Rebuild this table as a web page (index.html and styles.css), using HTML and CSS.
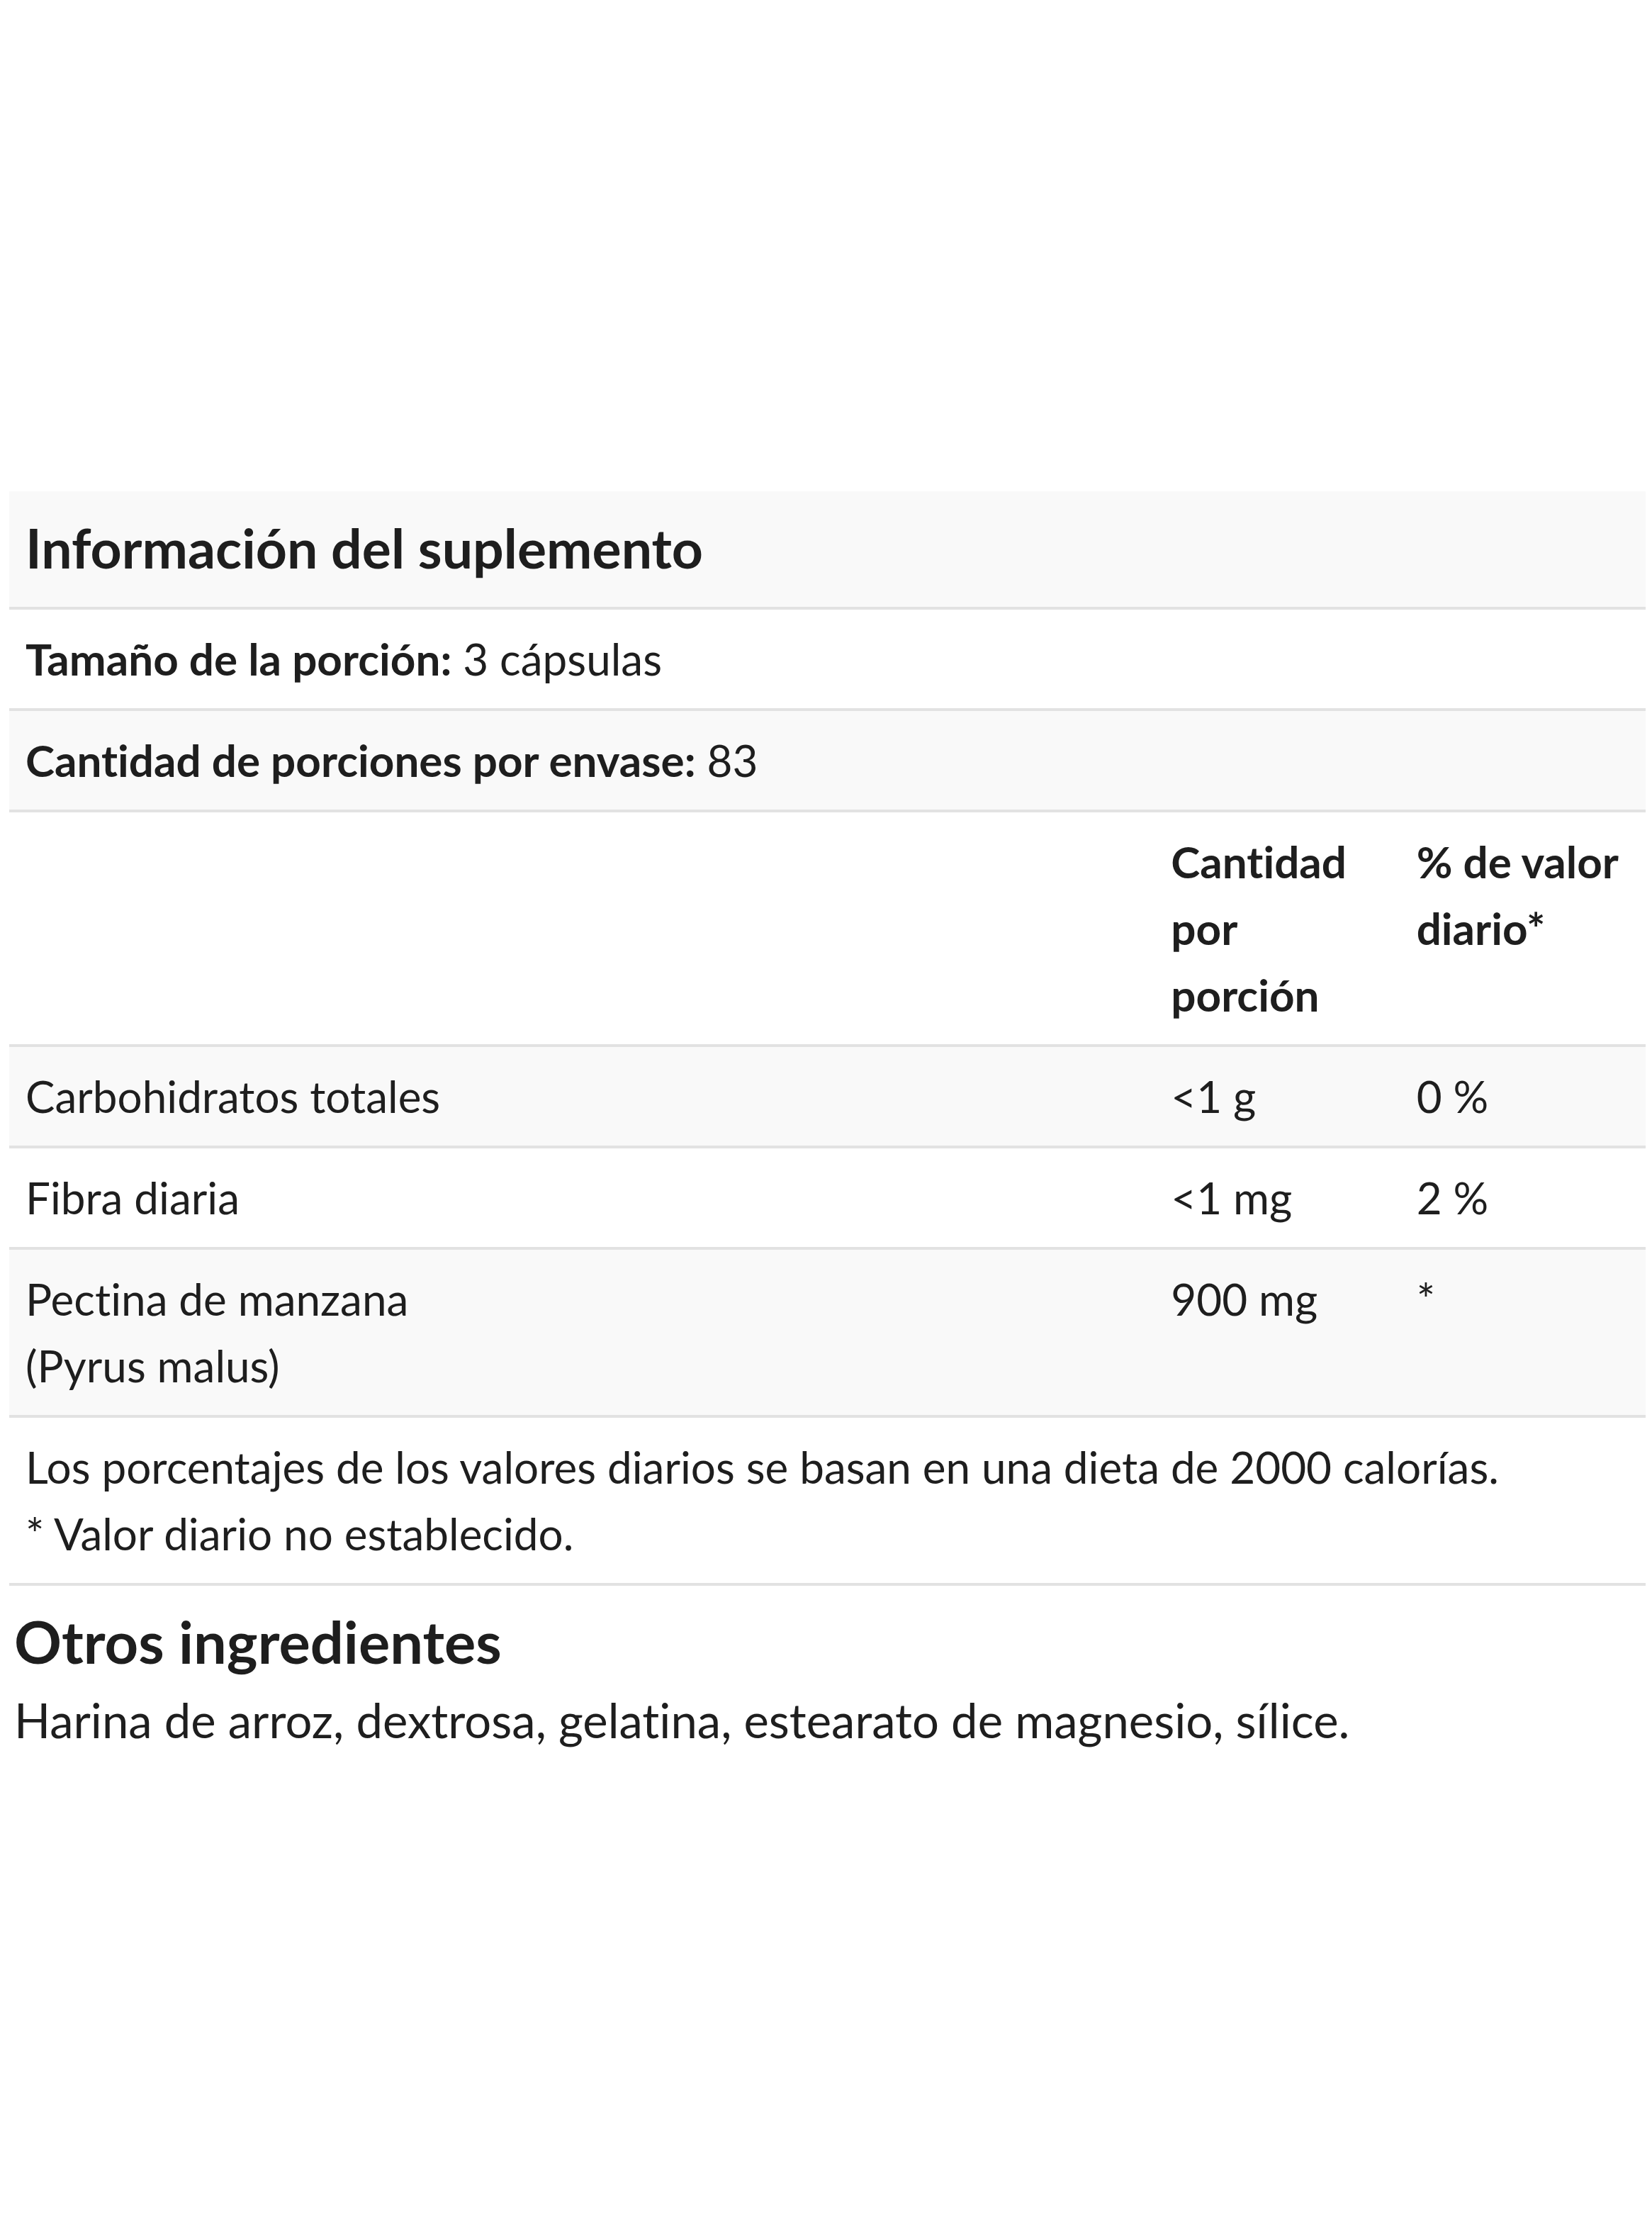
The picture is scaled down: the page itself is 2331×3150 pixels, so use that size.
FILE: index.html
```html
<!DOCTYPE html>
<html lang="es">
<head>
  <meta charset="UTF-8" />
  <meta name="viewport" content="width=device-width, initial-scale=1.0"/>
  <title>Información del suplemento</title>
  <link rel="stylesheet" href="styles.css">
</head>
<body>
  <div class="wrap">
    <table class="facts">
      <colgroup>
        <col>
        <col class="col-amount">
        <col class="col-dv">
      </colgroup>
      <tbody>
        <tr>
          <th class="facts-title" colspan="3">Información del suplemento</th>
        </tr>
        <tr>
          <td colspan="3"><strong>Tamaño de la porción:</strong> 3 cápsulas</td>
        </tr>
        <tr>
          <td colspan="3"><strong>Cantidad de porciones por envase:</strong> 83</td>
        </tr>
        <tr class="col-head">
          <td></td>
          <td><strong>Cantidad por porción</strong></td>
          <td><strong>% de valor diario*</strong></td>
        </tr>
        <tr>
          <td>Carbohidratos totales</td>
          <td>&lt;1 g</td>
          <td>0 %</td>
        </tr>
        <tr>
          <td>Fibra diaria</td>
          <td>&lt;1 mg</td>
          <td>2 %</td>
        </tr>
        <tr>
          <td>Pectina de manzana<br>(Pyrus malus)</td>
          <td>900 mg</td>
          <td>*</td>
        </tr>
        <tr>
          <td colspan="3">Los porcentajes de los valores diarios se basan en una dieta de 2000 calorías.<br>* Valor diario no establecido.</td>
        </tr>
      </tbody>
    </table>

    <div class="other">
      <h2>Otros ingredientes</h2>
      <p>Harina de arroz, dextrosa, gelatina, estearato de magnesio, sílice.</p>
    </div>
  </div>
</body>
</html>
```

FILE: styles.css
```css
:root {
  --text: #1e1e1e;
  --row-alt: #f9f9f9;
  --line: #e2e2e2;
}
body {
  margin: 0;
  background: #fff;
  color: var(--text);
  font-family: Lato, "Noto Sans", sans-serif;
  font-variant-ligatures: none;
}
.wrap {
  padding: 693px 9px 200px 13px;
}
.facts {
  width: 100%;
  border-collapse: separate;
  border-spacing: 0;
  font-size: 62px;
  line-height: 94px;
}
.facts .col-amount,
.facts .col-dv {
  width: 15%;
}
.facts th,
.facts td {
  padding: 22px 23px 23px;
  text-align: left;
  vertical-align: top;
  font-weight: 400;
  border-bottom: 4px solid var(--line);
}
.facts tr:nth-child(odd) {
  background: var(--row-alt);
}
.facts strong {
  font-weight: 700;
}
.facts .facts-title {
  font-size: 77px;
  line-height: 116px;
  font-weight: 700;
  padding: 21px 23px 26px;
}
.other {
  padding-left: 7px;
}
.other h2 {
  margin: 29px 0 0;
  font-size: 83px;
  line-height: 1.2;
  font-weight: 700;
}
.other p {
  margin: 11px 0 0;
  font-size: 67px;
  line-height: 99px;
}
```
